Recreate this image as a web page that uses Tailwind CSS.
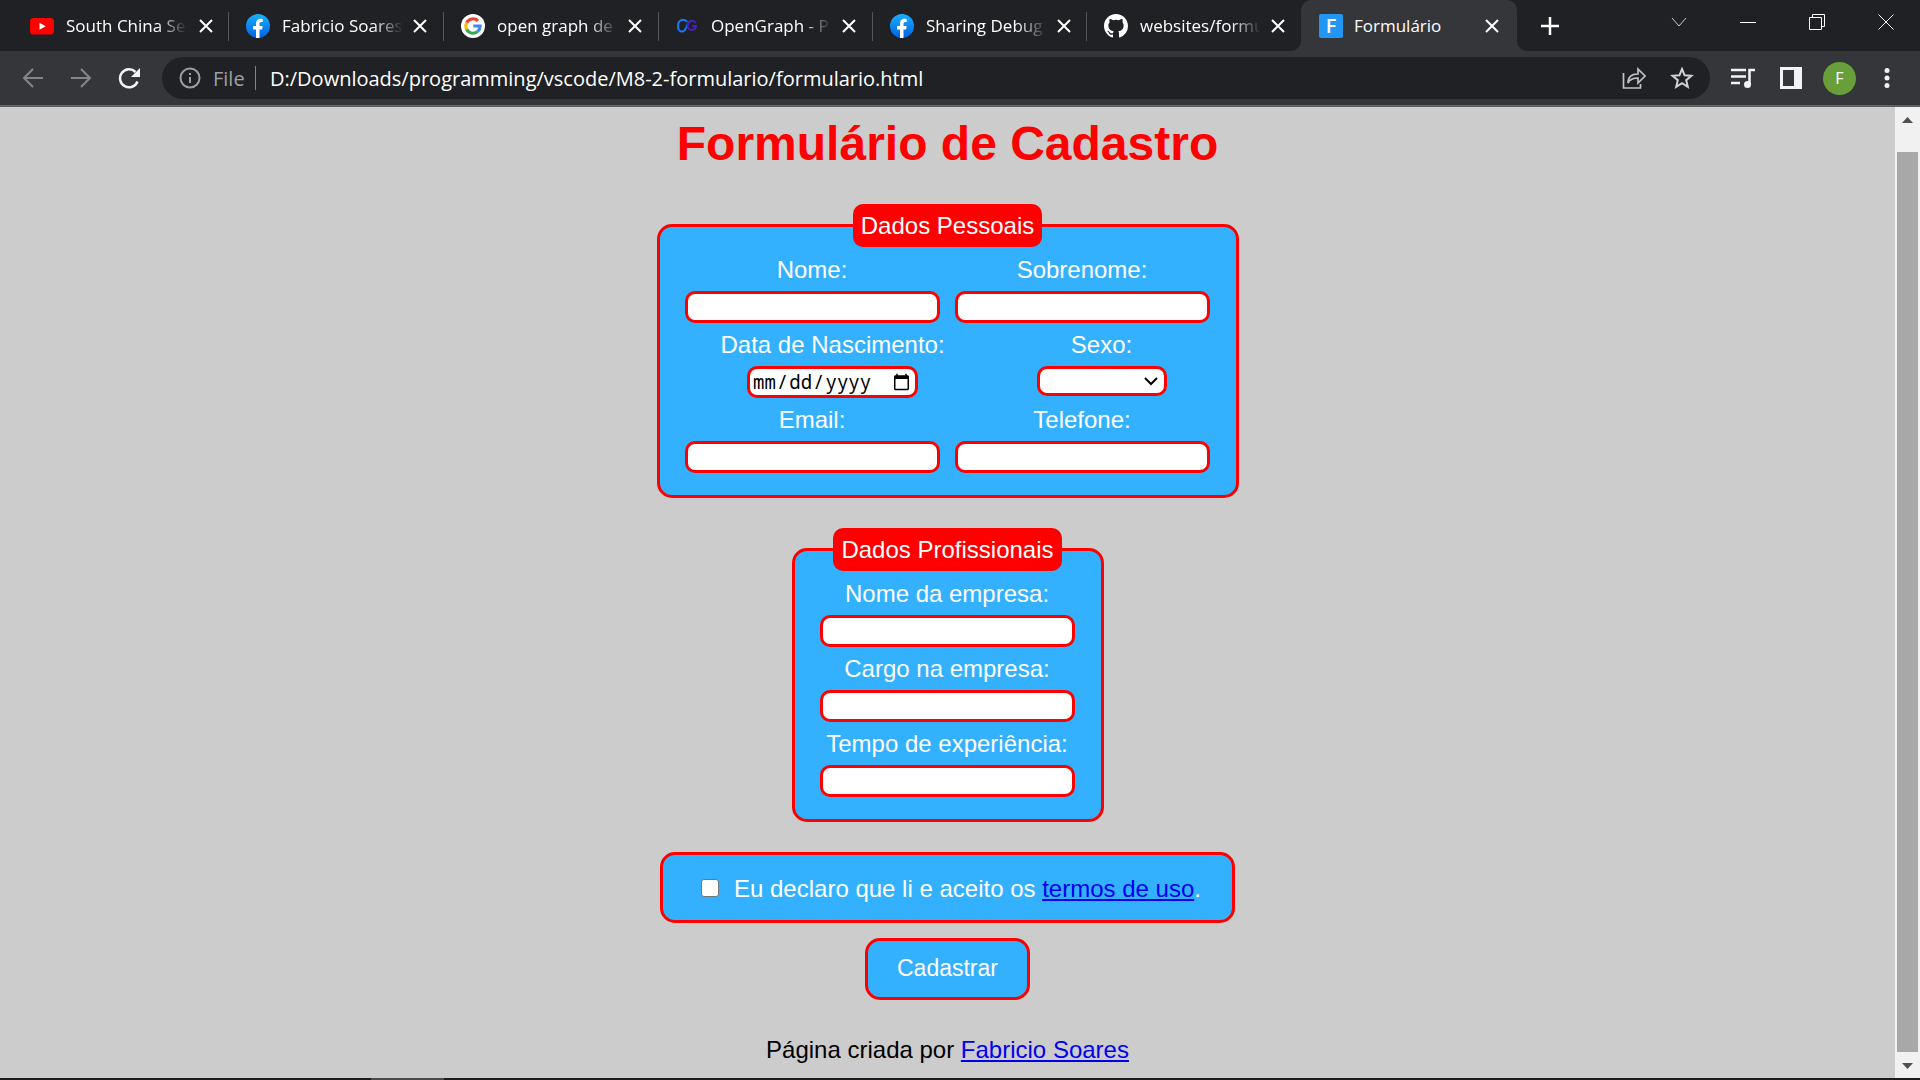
<!DOCTYPE html>
<html lang="pt-br">
<head>
<meta charset="utf-8">
<title>Formulário</title>
<script src="https://cdn.jsdelivr.net/npm/@tailwindcss/browser@4"></script>
</head>
<body class="min-h-screen flex flex-col bg-[#cccccc] font-['Liberation_Sans',Arial,sans-serif]">
<header class="text-white font-['Open_Sans','Noto_Sans',sans-serif]">
  <div class="flex h-[51px] bg-[#202124]">
    <div class="flex flex-1 pl-[14px] text-[17px]" role="tablist">
      <div class="flex w-[215px] items-center pl-4 pr-4 relative">
        <svg class="size-6 shrink-0" viewBox="0 0 24 24"><rect y="4" width="24" height="16.500" rx="3.500" fill="#f00"/><path d="M9.500 8.700v7l6.200-3.500z" fill="#fff"/></svg>
        <span class="ml-3 w-[121px] whitespace-nowrap mask-r-from-75%">South China Se</span>
        <button class="ml-3 shrink-0" aria-label="Fechar"><svg class="size-[14px]" viewBox="0 0 14 14" stroke="#fff" stroke-width="2"><path d="M1 1l12 12M13 1L1 13"/></svg></button>
        <i class="absolute right-0 top-3 h-[29px] w-px bg-[#55565a]"></i>
      </div>
      <div class="flex w-[215px] items-center pl-[17px] pr-4 relative">
        <svg class="size-6 shrink-0" viewBox="0 0 24 24"><defs><linearGradient id="fb" x2="0" y2="1"><stop stop-color="#19afff"/><stop offset="1" stop-color="#0062e0"/></linearGradient></defs><circle cx="12" cy="12" r="12" fill="url(#fb)"/><path d="M10 24v-8.500H7V12h3V9.500C10 6.300 11.800 4.700 14.500 4.700c1 0 2.200.2 2.200.2v3h-1.500c-1.500 0-1.700.8-1.700 1.800V12h3.200l-.6 3.500h-2.600V24z" fill="#fff"/></svg>
        <span class="ml-3 w-[121px] whitespace-nowrap mask-r-from-75%">Fabricio Soares</span>
        <button class="ml-[10px] shrink-0" aria-label="Fechar"><svg class="size-[14px]" viewBox="0 0 14 14" stroke="#fff" stroke-width="2"><path d="M1 1l12 12M13 1L1 13"/></svg></button>
        <i class="absolute right-0 top-3 h-[29px] w-px bg-[#55565a]"></i>
      </div>
      <div class="flex w-[215px] items-center pl-[17px] pr-4 relative">
        <svg class="size-6 shrink-0" viewBox="0 0 24 24"><circle cx="12" cy="12" r="12" fill="#fff"/><g fill="none" stroke-width="3"><path d="M17 6.900A7.200 7.200 0 0 0 5.600 8.700" stroke="#ea4335"/><path d="M5.600 8.700a7.200 7.200 0 0 0 0 6.600" stroke="#fbbc05"/><path d="M5.600 15.300A7.200 7.200 0 0 0 16.800 17.400" stroke="#34a853"/><path d="M16.800 17.400A7.200 7.200 0 0 0 19.200 12H12.300" stroke="#4285f4"/></g></svg>
        <span class="ml-3 w-[121px] whitespace-nowrap mask-r-from-75%">open graph de</span>
        <button class="ml-[10px] shrink-0" aria-label="Fechar"><svg class="size-[14px]" viewBox="0 0 14 14" stroke="#fff" stroke-width="2"><path d="M1 1l12 12M13 1L1 13"/></svg></button>
        <i class="absolute right-0 top-3 h-[29px] w-px bg-[#55565a]"></i>
      </div>
      <div class="flex w-[214px] items-center pl-4 pr-4 relative">
        <svg class="size-6 shrink-0" viewBox="0 0 24 24" fill="none" stroke-width="2"><path d="M12 8c-2-3.500-9-3-9 4s6 7 8 2 3-7 5-7" stroke="#1877f2"/><path d="M21 9c-2-3-7-3-8 1s1 6 4 6 4-3 4-4h-4" stroke="#4a1fb8"/></svg>
        <span class="ml-3 w-[121px] whitespace-nowrap mask-r-from-75%">OpenGraph - P</span>
        <button class="ml-[10px] shrink-0" aria-label="Fechar"><svg class="size-[14px]" viewBox="0 0 14 14" stroke="#fff" stroke-width="2"><path d="M1 1l12 12M13 1L1 13"/></svg></button>
        <i class="absolute right-0 top-3 h-[29px] w-px bg-[#55565a]"></i>
      </div>
      <div class="flex w-[214px] items-center pl-[17px] pr-4 relative">
        <svg class="size-6 shrink-0" viewBox="0 0 24 24"><circle cx="12" cy="12" r="12" fill="url(#fb)"/><path d="M10 24v-8.500H7V12h3V9.500C10 6.300 11.800 4.700 14.500 4.700c1 0 2.200.2 2.200.2v3h-1.500c-1.500 0-1.700.8-1.700 1.800V12h3.200l-.6 3.500h-2.600V24z" fill="#fff"/></svg>
        <span class="ml-3 w-[121px] whitespace-nowrap mask-r-from-75%">Sharing Debug</span>
        <button class="ml-[10px] shrink-0" aria-label="Fechar"><svg class="size-[14px]" viewBox="0 0 14 14" stroke="#fff" stroke-width="2"><path d="M1 1l12 12M13 1L1 13"/></svg></button>
        <i class="absolute right-0 top-3 h-[29px] w-px bg-[#55565a]"></i>
      </div>
      <div class="flex w-[214px] items-center pl-[17px] pr-4">
        <svg class="size-6 shrink-0" viewBox="0 0 16 16" fill="#fff"><path d="M8 0C3.580 0 0 3.580 0 8c0 3.540 2.290 6.530 5.470 7.590.4.070.55-.17.55-.38 0-.19-.01-.82-.01-1.490-2.010.37-2.530-.49-2.690-.94-.09-.23-.48-.94-.82-1.130-.28-.15-.68-.52-.01-.53.63-.01 1.080.58 1.230.82.72 1.210 1.870.87 2.330.66.07-.52.28-.87.51-1.070-1.780-.2-3.640-.89-3.640-3.950 0-.87.31-1.590.82-2.150-.08-.2-.36-1.020.08-2.120 0 0 .67-.21 2.200.82a7.500 7.500 0 0 1 4 0c1.530-1.040 2.200-.82 2.200-.82.44 1.100.16 1.920.08 2.120.51.56.82 1.270.82 2.150 0 3.070-1.870 3.750-3.650 3.950.29.25.54.73.54 1.480 0 1.070-.01 1.930-.01 2.200 0 .21.15.46.55.38A8 8 0 0 0 16 8c0-4.420-3.580-8-8-8z"/></svg>
        <span class="ml-3 w-[121px] whitespace-nowrap mask-r-from-75%">websites/formu</span>
        <button class="ml-[10px] shrink-0" aria-label="Fechar"><svg class="size-[14px]" viewBox="0 0 14 14" stroke="#fff" stroke-width="2"><path d="M1 1l12 12M13 1L1 13"/></svg></button>
      </div>
      <div class="flex w-[216px] items-center rounded-t-[10px] bg-[#35363a] px-[18px] relative">
        <svg class="absolute -left-[10px] bottom-0 size-[10px]" viewBox="0 0 10 10"><path d="M10 0v10H0A10 10 0 0 0 10 0" fill="#35363a"/></svg>
        <svg class="absolute -right-[10px] bottom-0 size-[10px]" viewBox="0 0 10 10"><path d="M0 0v10h10A10 10 0 0 1 0 0" fill="#35363a"/></svg>
        <span class="flex size-6 shrink-0 items-center justify-center rounded-[2px] bg-[#2196f3] text-xl font-semibold" aria-hidden="true">F</span>
        <span class="ml-[11px] w-[121px]">Formulário</span>
        <button class="ml-3 shrink-0" aria-label="Fechar"><svg class="size-[14px]" viewBox="0 0 14 14" stroke="#fff" stroke-width="2"><path d="M1 1l12 12M13 1L1 13"/></svg></button>
      </div>
      <button class="ml-6" aria-label="Nova guia"><svg class="size-[18px]" viewBox="0 0 18 18" stroke="#fff" stroke-width="2.500"><path d="M9 0v18M0 9h18"/></svg></button>
    </div>
    <div class="flex h-11 items-center gap-[53px] pr-[26px]">
      <button aria-label="Pesquisar guias"><svg class="size-4" viewBox="0 0 16 16" fill="none" stroke="#ccc"><path d="M1 4l7 8 7-8"/></svg></button>
      <button aria-label="Minimizar"><svg class="size-4" viewBox="0 0 16 16" stroke="#fff"><path d="M0 8.500h16"/></svg></button>
      <button aria-label="Restaurar"><svg class="size-4" viewBox="0 0 16 16" fill="none" stroke="#fff"><path d="M.5 3.500h12v12H.5zM3.500 3.500v-3h12v12h-3"/></svg></button>
      <button aria-label="Fechar janela"><svg class="size-4" viewBox="0 0 16 16" stroke="#fff"><path d="M.5.500l15 15M15.500.500l-15 15"/></svg></button>
    </div>
  </div>
  <div class="flex h-14 items-center border-b-2 border-[#5f6064] bg-[#35363a] pl-[22px] pr-[30px]">
    <button aria-label="Voltar"><svg class="size-[22px]" viewBox="0 0 22 22" fill="none" stroke="#85868a" stroke-width="2"><path d="M21 11H2M11 2l-9 9 9 9"/></svg></button>
    <button class="ml-[26px]" aria-label="Avançar"><svg class="size-[22px]" viewBox="0 0 22 22" fill="none" stroke="#85868a" stroke-width="2"><path d="M1 11h19M11 2l9 9-9 9"/></svg></button>
    <button class="ml-[26px]" aria-label="Recarregar"><svg class="size-[22px]" viewBox="0 0 22 22"><path d="M19.500 14.500A9 9 0 1 1 17.500 5" fill="none" stroke="#f1f3f4" stroke-width="2.500"/><path d="M22 1v9h-9z" fill="#f1f3f4"/></svg></button>
    <div class="ml-[22px] flex h-[42px] flex-1 items-center rounded-full bg-[#202124] pl-[17px] pr-4 text-xl">
      <svg class="size-[22px]" viewBox="0 0 22 22" fill="none" stroke="#9aa0a6" stroke-width="2"><circle cx="11" cy="11" r="9.500"/><path d="M11 10v6M11 6v2"/></svg>
      <span class="ml-3 w-[31px] pt-px text-[#9aa0a6]">File</span>
      <i class="ml-[11px] h-6 w-px bg-[#85868a]"></i>
      <input class="ml-[14px] min-w-0 flex-1 pt-[2px] outline-none" aria-label="Endereço" value="D:/Downloads/programming/vscode/M8-2-formulario/formulario.html">
      <button aria-label="Compartilhar"><svg class="size-6" viewBox="0 0 24 24" fill="none" stroke="#c0c2c5" stroke-width="1.700"><path d="M1.500 7v15h17v-4"/><path d="M6 17c0-6 3-9 10-9V3l7 7-7 7v-5c-5 0-8 1-10 5z"/></svg></button>
      <button class="ml-6" aria-label="Favoritar"><svg class="size-6" viewBox="0 0 24 24" fill="none" stroke="#d0d2d5" stroke-width="2"><path d="M12 3l2.600 6.300 6.800.5-5.200 4.400 1.600 6.600L12 17.200l-5.800 3.600 1.600-6.600-5.200-4.400 6.800-.5z"/></svg></button>
    </div>
    <button class="ml-[21px]" aria-label="Mídia"><svg class="size-6" viewBox="0 0 24 24" fill="none" stroke="#f1f3f4" stroke-width="2.500"><path d="M0 4h15M0 10.500h15M0 17h9M18.500 19V4H24"/><circle cx="16.500" cy="18.500" r="3.500" fill="#f1f3f4" stroke="none"/></svg></button>
    <button class="ml-[25px]" aria-label="Painel lateral"><svg class="size-[22px]" viewBox="0 0 22 22"><path fill-rule="evenodd" fill="#f1f3f4" d="M0 0h22v22H0zM3 3v16h11V3z"/></svg></button>
    <button class="ml-[21px] size-[33px] rounded-full bg-[#689f38] text-base" aria-label="Perfil">F</button>
    <button class="ml-7" aria-label="Menu"><svg class="h-5 w-[6px]" viewBox="0 0 6 20" fill="#f1f3f4"><circle cx="3" cy="2.500" r="2.500"/><circle cx="3" cy="10" r="2.500"/><circle cx="3" cy="17.500" r="2.500"/></svg></button>
  </div>
</header>
<div class="flex flex-1">
  <div class="flex flex-1 flex-col">
  <main>
    <h1 class="pt-[9px] text-center text-5xl leading-[56px] font-bold text-[#ff0000]">Formulário de Cadastro</h1>
    <form class="mt-8 flex flex-col items-center text-2xl leading-7 text-white">
      <fieldset class="w-[582px] text-center">
        <legend class="relative mx-auto h-[43px] rounded-[10px] bg-[#ff0000] px-2 py-2">Dados Pessoais</legend>
        <div class="-mt-[23px] grid grid-cols-2 gap-x-[15px] gap-y-2 rounded-[15px] border-[3px] border-[#ff0000] bg-[#33b1ff] pt-[29px] pr-[26px] pb-[22px] pl-[25px]">
          <div class="flex flex-col items-center gap-[7px]"><label for="nome">Nome:</label><input id="nome" class="h-8 w-full rounded-[10px] border-[3px] border-[#ff0000] bg-white px-2 text-base text-black"></div>
          <div class="flex flex-col items-center gap-[7px]"><label for="sobrenome">Sobrenome:</label><input id="sobrenome" class="h-8 w-full rounded-[10px] border-[3px] border-[#ff0000] bg-white px-2 text-base text-black"></div>
          <div class="col-span-2 flex justify-between pr-[43px] pl-9">
            <div class="flex flex-col items-center gap-[7px]"><label for="nascimento">Data de Nascimento:</label><input id="nascimento" type="date" class="h-8 w-[171px] rounded-[10px] border-[3px] border-[#ff0000] bg-white px-[2px] font-['Noto_Sans_Mono','DejaVu_Sans_Mono',monospace] text-[19px] text-black"></div>
            <div class="flex flex-col items-center gap-[7px]"><label for="sexo">Sexo:</label><span class="relative flex h-8 items-start"><select id="sexo" class="h-[30px] w-[130px] appearance-none rounded-[10px] border-[3px] border-[#ff0000] bg-white text-base text-black"><option></option><option>Masculino</option><option>Feminino</option></select><svg class="pointer-events-none absolute right-[9px] top-[10px] h-[10px] w-[14px]" viewBox="0 0 14 10" fill="none" stroke="#000" stroke-width="2"><path d="M1 2l6 6 6-6"/></svg></span></div>
          </div>
          <div class="flex flex-col items-center gap-[7px]"><label for="email">Email:</label><input id="email" class="h-8 w-full rounded-[10px] border-[3px] border-[#ff0000] bg-white px-2 text-base text-black"></div>
          <div class="flex flex-col items-center gap-[7px]"><label for="telefone">Telefone:</label><input id="telefone" class="h-8 w-full rounded-[10px] border-[3px] border-[#ff0000] bg-white px-2 text-base text-black"></div>
        </div>
      </fieldset>
      <fieldset class="mt-[30px] w-[312px] text-center">
        <legend class="relative mx-auto h-[43px] rounded-[10px] bg-[#ff0000] px-2 py-2">Dados Profissionais</legend>
        <div class="-mt-[23px] flex flex-col gap-2 rounded-[15px] border-[3px] border-[#ff0000] bg-[#33b1ff] pt-[29px] pr-[26px] pb-[22px] pl-[25px]">
          <div class="flex flex-col items-center gap-[7px]"><label for="empresa">Nome da empresa:</label><input id="empresa" class="h-8 w-full rounded-[10px] border-[3px] border-[#ff0000] bg-white px-2 text-base text-black"></div>
          <div class="flex flex-col items-center gap-[7px]"><label for="cargo">Cargo na empresa:</label><input id="cargo" class="h-8 w-full rounded-[10px] border-[3px] border-[#ff0000] bg-white px-2 text-base text-black"></div>
          <div class="flex flex-col items-center gap-[7px]"><label for="tempo">Tempo de experiência:</label><input id="tempo" class="h-8 w-full rounded-[10px] border-[3px] border-[#ff0000] bg-white px-2 text-base text-black"></div>
        </div>
      </fieldset>
      <div class="mt-[30px] flex h-[71px] w-[575px] items-center rounded-[15px] border-[3px] border-[#ff0000] bg-[#33b1ff] pl-[38px]">
        <input id="termos" type="checkbox" class="mr-[15px] size-[18px] appearance-none rounded-[3px] border border-[#767676] bg-white">
        <label for="termos" class="pt-[2px]">Eu declaro que li e aceito os <a href="#" class="text-[#0000ee] underline">termos de uso</a>.</label>
      </div>
      <button type="submit" class="mt-[15px] h-[62px] w-[165px] rounded-[15px] border-[3px] border-[#ff0000] bg-[#33b1ff] pb-[2px] text-[23px]">Cadastrar</button>
    </form>
  </main>
  <footer class="mt-9 text-center text-2xl leading-7 text-black">Página criada por <a href="#" class="text-[#0000ee] underline">Fabricio Soares</a></footer>
  </div>
  <div class="flex w-[25px] flex-col items-center bg-[#f1f1f1] pt-[10px] pb-[9px]">
    <svg class="h-[6px] w-[11px]" viewBox="0 0 11 6"><path d="M5.500 0L11 6H0z" fill="#505050"/></svg>
    <div class="mt-[29px] mb-[11px] w-[21px] flex-1 bg-[#a8a8a8]"></div>
    <svg class="h-[6px] w-[11px]" viewBox="0 0 11 6"><path d="M5.500 6L11 0H0z" fill="#505050"/></svg>
  </div>
</div>
<div class="h-[2px] bg-[#201c1d] pl-[371px]"><div class="h-full w-[73px] bg-[#4d494a]"></div></div>
</body>
</html>
